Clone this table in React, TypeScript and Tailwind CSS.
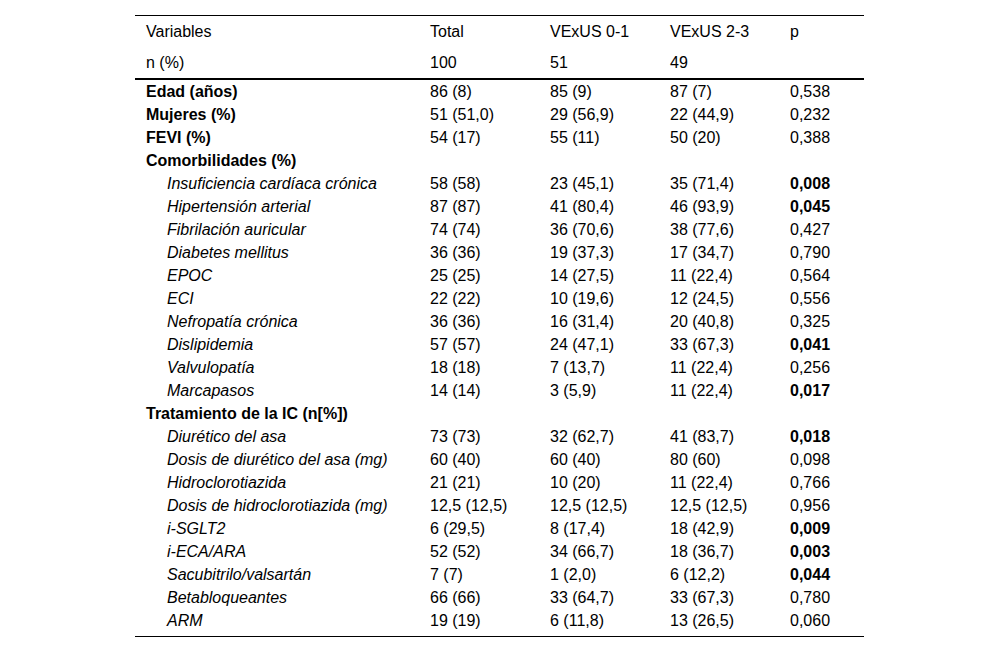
import React from "react";

type Row = {
  label: string;
  kind: "bold" | "sub";
  v?: [string, string, string, string];
  sig?: boolean;
};

const rows: Row[] = [
  { label: "Edad (años)", kind: "bold", v: ["86 (8)", "85 (9)", "87 (7)", "0,538"] },
  { label: "Mujeres (%)", kind: "bold", v: ["51 (51,0)", "29 (56,9)", "22 (44,9)", "0,232"] },
  { label: "FEVI (%)", kind: "bold", v: ["54 (17)", "55 (11)", "50 (20)", "0,388"] },
  { label: "Comorbilidades (%)", kind: "bold" },
  { label: "Insuficiencia cardíaca crónica", kind: "sub", v: ["58 (58)", "23 (45,1)", "35 (71,4)", "0,008"], sig: true },
  { label: "Hipertensión arterial", kind: "sub", v: ["87 (87)", "41 (80,4)", "46 (93,9)", "0,045"], sig: true },
  { label: "Fibrilación auricular", kind: "sub", v: ["74 (74)", "36 (70,6)", "38 (77,6)", "0,427"] },
  { label: "Diabetes mellitus", kind: "sub", v: ["36 (36)", "19 (37,3)", "17 (34,7)", "0,790"] },
  { label: "EPOC", kind: "sub", v: ["25 (25)", "14 (27,5)", "11 (22,4)", "0,564"] },
  { label: "ECI", kind: "sub", v: ["22 (22)", "10 (19,6)", "12 (24,5)", "0,556"] },
  { label: "Nefropatía crónica", kind: "sub", v: ["36 (36)", "16 (31,4)", "20 (40,8)", "0,325"] },
  { label: "Dislipidemia", kind: "sub", v: ["57 (57)", "24 (47,1)", "33 (67,3)", "0,041"], sig: true },
  { label: "Valvulopatía", kind: "sub", v: ["18 (18)", "7 (13,7)", "11 (22,4)", "0,256"] },
  { label: "Marcapasos", kind: "sub", v: ["14 (14)", "3 (5,9)", "11 (22,4)", "0,017"], sig: true },
  { label: "Tratamiento de la IC (n[%])", kind: "bold" },
  { label: "Diurético del asa", kind: "sub", v: ["73 (73)", "32 (62,7)", "41 (83,7)", "0,018"], sig: true },
  { label: "Dosis de diurético del asa (mg)", kind: "sub", v: ["60 (40)", "60 (40)", "80 (60)", "0,098"] },
  { label: "Hidroclorotiazida", kind: "sub", v: ["21 (21)", "10 (20)", "11 (22,4)", "0,766"] },
  { label: "Dosis de hidroclorotiazida (mg)", kind: "sub", v: ["12,5 (12,5)", "12,5 (12,5)", "12,5 (12,5)", "0,956"] },
  { label: "i-SGLT2", kind: "sub", v: ["6 (29,5)", "8 (17,4)", "18 (42,9)", "0,009"], sig: true },
  { label: "i-ECA/ARA", kind: "sub", v: ["52 (52)", "34 (66,7)", "18 (36,7)", "0,003"], sig: true },
  { label: "Sacubitrilo/valsartán", kind: "sub", v: ["7 (7)", "1 (2,0)", "6 (12,2)", "0,044"], sig: true },
  { label: "Betabloqueantes", kind: "sub", v: ["66 (66)", "33 (64,7)", "33 (67,3)", "0,780"] },
  { label: "ARM", kind: "sub", v: ["19 (19)", "6 (11,8)", "13 (26,5)", "0,060"] },
];

export default function App() {
  return (
    <div
      className="w-[1000px] h-[653px] bg-white text-black pt-[15px] pl-[135px]"
      style={{ fontFamily: '"Liberation Sans", Arial, sans-serif' }}
    >
      <div className="w-[729px] text-[16px] border-t border-black">
        <div className="flex h-[31px] items-center pt-[1px]">
          <div className="w-[284px] pl-[11px]">Variables</div>
          <div className="w-[120px] pl-[11px]">Total</div>
          <div className="w-[120px] pl-[11px]">VExUS 0-1</div>
          <div className="w-[120px] pl-[11px]">VExUS 2-3</div>
          <div className="w-[85px] pl-[11px]">p</div>
        </div>
        <div className="flex h-[31px] items-center">
          <div className="w-[284px] pl-[11px]">n (%)</div>
          <div className="w-[120px] pl-[11px]">100</div>
          <div className="w-[120px] pl-[11px]">51</div>
          <div className="w-[120px] pl-[11px]">49</div>
          <div className="w-[85px] pl-[11px]"></div>
        </div>
        <div className="border-t-2 border-black pb-[4px] border-b">
          {rows.map((r, i) => (
            <div key={i} className="flex h-[23px] items-center leading-[23px]">
              <div
                className={
                  r.kind === "bold"
                    ? "w-[284px] pl-[11px] font-bold whitespace-nowrap"
                    : "w-[284px] pl-[32px] italic whitespace-nowrap"
                }
              >
                {r.label}
              </div>
              {r.v && (
                <>
                  <div className="w-[120px] pl-[11px] whitespace-nowrap">{r.v[0]}</div>
                  <div className="w-[120px] pl-[11px] whitespace-nowrap">{r.v[1]}</div>
                  <div className="w-[120px] pl-[11px] whitespace-nowrap">{r.v[2]}</div>
                  <div className={r.sig ? "w-[85px] pl-[11px] font-bold" : "w-[85px] pl-[11px]"}>
                    {r.v[3]}
                  </div>
                </>
              )}
            </div>
          ))}
        </div>
      </div>
    </div>
  );
}
